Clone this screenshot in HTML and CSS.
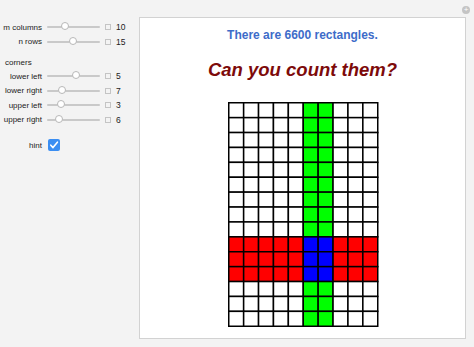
FILE: index.html
```html
<!DOCTYPE html>
<html>
<head>
<title>Counting Rectangles</title>
<link rel="stylesheet" href="styles.css">
</head>
<body>
    <div class="app">
        <div class="controls">
            <div class="row">
                <span class="label">m columns</span>
                <span class="slider"><span class="thumb" style="left: 18px"></span></span>
                <span class="box"></span>
                <span class="value">10</span>
            </div>
            <div class="row">
                <span class="label">n rows</span>
                <span class="slider"><span class="thumb" style="left: 26px"></span></span>
                <span class="box"></span>
                <span class="value">15</span>
            </div>

            <div class="section">corners</div>
            <div class="row">
                <span class="label">lower left</span>
                <span class="slider"><span class="thumb" style="left: 29px"></span></span>
                <span class="box"></span>
                <span class="value">5</span>
            </div>
            <div class="row">
                <span class="label">lower right</span>
                <span class="slider"><span class="thumb" style="left: 15px"></span></span>
                <span class="box"></span>
                <span class="value">7</span>
            </div>
            <div class="row">
                <span class="label">upper left</span>
                <span class="slider"><span class="thumb" style="left: 14px"></span></span>
                <span class="box"></span>
                <span class="value">3</span>
            </div>
            <div class="row">
                <span class="label">upper right</span>
                <span class="slider"><span class="thumb" style="left: 12px"></span></span>
                <span class="box"></span>
                <span class="value">6</span>
            </div>

            <div class="row hint-row">
                <span class="label">hint</span>
                <span class="checkbox">
                    <svg width="12" height="12" viewBox="0 0 12 12">
                        <path d="M2.8 6.2 L5 8.6 L9.4 3.2" fill="none" stroke="white" stroke-width="1.6" stroke-linecap="round" stroke-linejoin="round"/>
                    </svg>
                </span>
            </div>
        </div>

        <div class="panel">
            <span class="plus">+</span>
            <div class="count">There are 6600 rectangles.</div>
            <div class="question">Can you count them?</div>
            <svg class="grid" width="151" height="225" viewBox="0 0 151 225" id="grid"></svg>
        </div>
    </div>

    <script>
        var cols = 10;
        var rows = 15;
        var size = 14.9;
        var svg = document.getElementById("grid");
        var html = '';

        for (let r = 0; r < rows; r++) {
            for (let c = 0; c < cols; c++) {
                let green = (c == 5 || c == 6);
                let red = (r >= 9 && r <= 11);
                let fill = 'white';
                if (green && red) fill = '#0000ff';
                else if (green) fill = '#00ff00';
                else if (red) fill = '#ff0000';
                html += '<rect x="' + (0.75 + c * size) + '" y="' + (0.75 + r * size) +
                    '" width="' + size + '" height="' + size + '" fill="' + fill +
                    '" stroke="black" stroke-width="1.5"/>';
            }
        }
        svg.innerHTML = html;
    </script>
</body>
</html>
```

FILE: styles.css
```css
body {
    margin: 0;
    padding: 0;
    background-color: #f3f3f3;
    font-family: "Liberation Sans", Arial, sans-serif;
}

.app {
    display: flex;
    height: 347px;
}

.controls {
    width: 139px;
    padding-top: 20px;
    font-size: 8px;
    color: #222;
}

.row {
    display: flex;
    align-items: center;
    height: 14.5px;
}

.label {
    width: 42px;
    text-align: right;
    white-space: nowrap;
}

.slider {
    position: relative;
    width: 53px;
    height: 2px;
    margin-left: 5px;
    background-color: #c9c9c9;
    border-radius: 1px;
}

.thumb {
    position: absolute;
    top: -4px;
    width: 8px;
    height: 8px;
    margin-left: -4px;
    background-color: white;
    border: 1px solid #b8b8b8;
    border-radius: 50%;
    box-sizing: border-box;
}

.box {
    width: 4px;
    height: 4px;
    margin-left: 5px;
    border: 1px solid #c4c4c4;
}

.value {
    margin-left: 5px;
    font-size: 8.5px;
}

.section {
    margin-top: 7px;
    height: 13px;
    line-height: 13px;
    padding-left: 5px;
}

.hint-row {
    margin-top: 11px;
}

.checkbox {
    display: flex;
    width: 12px;
    height: 12px;
    margin-left: 6px;
    background-color: #3b8ef2;
    border-radius: 2px;
}

.panel {
    position: relative;
    margin-top: 17px;
    width: 325px;
    height: 320px;
    background-color: white;
    border: 1px solid #d2d2d2;
    display: flex;
    flex-direction: column;
    align-items: center;
}

.plus {
    position: absolute;
    top: -12px;
    right: -5px;
    width: 8px;
    height: 8px;
    line-height: 8px;
    font-size: 8px;
    text-align: center;
    color: white;
    background-color: #c4c4c4;
    border-radius: 50%;
}

.count {
    margin-top: 10px;
    font-size: 12px;
    font-weight: bold;
    color: #3d6cc9;
}

.question {
    margin-top: 17px;
    font-size: 18.5px;
    font-weight: bold;
    font-style: italic;
    color: #7d0a0a;
}

.grid {
    margin-top: 21px;
    margin-left: 2px;
}
```
